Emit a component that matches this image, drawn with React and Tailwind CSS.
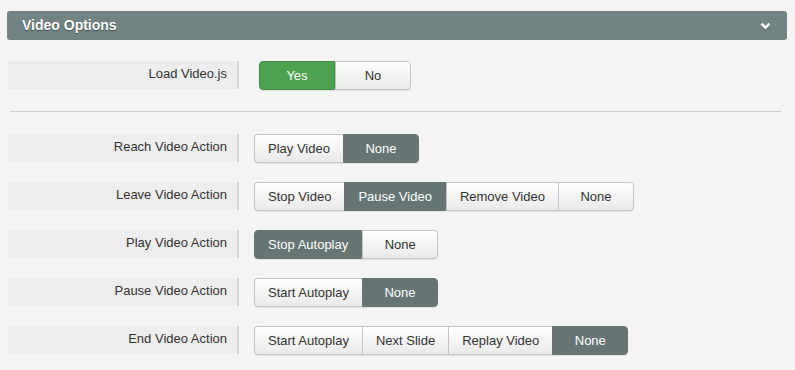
// Video options settings panel
import React from 'react';

const rows = [
  { label: 'Reach Video Action', options: ['Play Video', 'None'], active: 1 },
  { label: 'Leave Video Action', options: ['Stop Video', 'Pause Video', 'Remove Video', 'None'], active: 1 },
  { label: 'Play Video Action', options: ['Stop Autoplay', 'None'], active: 0 },
  { label: 'Pause Video Action', options: ['Start Autoplay', 'None'], active: 1 },
  { label: 'End Video Action', options: ['Start Autoplay', 'Next Slide', 'Replay Video', 'None'], active: 3 },
];

const Label = ({ children }) => (
  <div className="flex items-center w-[231px] h-[28px] bg-[#ededed] border-r-2 border-[#d4d4d4] justify-end pr-[10px] pb-[2px] text-[13px] text-[#333]">
    {children}
  </div>
);

const Segmented = ({ options, active, green }) => (
  <div className="flex h-[29px] rounded-[4px] shadow-[0_1px_1px_rgba(0,0,0,0.08)]">
    {options.map((o, i) => {
      const first = i === 0;
      const last = i === options.length - 1;
      const on = i === active;
      let cls = 'flex items-center justify-center min-w-[76px] px-[13px] text-[13px] ';
      if (first) cls += 'rounded-l-[4px] ';
      if (last) cls += 'rounded-r-[4px] ';
      if (on) {
        cls += green
          ? 'bg-[#4ea24f] text-white border border-[#3f8f40] '
          : 'bg-[#667474] text-white border border-[#667474] ';
      } else {
        cls += 'bg-gradient-to-b from-white to-[#e9e9e9] text-[#333] border-y border-[#c4c4c4] ';
        if (first) cls += 'border-l ';
        if (last) cls += 'border-r ';
        if (!first) cls += 'border-l ';
      }
      return (
        <div key={i} className={cls}>
          {o}
        </div>
      );
    })}
  </div>
);

export default function App() {
  return (
    <div className="w-[795px] h-[370px] bg-[#f4f4f4] pt-[11px] pl-[7px] font-['Liberation_Sans',Arial,sans-serif] overflow-hidden">
      <div className="w-[780px] h-[29px] bg-[#718383] rounded-[3px] flex items-center justify-between pl-[15px] pr-[16px]">
        <span className="text-white font-bold text-[14px] [text-shadow:0_1px_1px_rgba(0,0,0,0.45)]">Video Options</span>
        <svg width="11" height="8" viewBox="0 0 11 8" className="drop-shadow-[0_1px_0_rgba(0,0,0,0.3)]">
          <path d="M1.5 1.8 L5.5 5.6 L9.5 1.8" fill="none" stroke="white" strokeWidth="2.6" />
        </svg>
      </div>

      <div className="flex items-start mt-[21px] ml-[1px]">
        <Label>Load Video.js</Label>
        <div className="ml-[20px]">
          <Segmented options={['Yes', 'No']} active={0} green />
        </div>
      </div>

      <div className="mt-[21px] ml-[3px] w-[771px] h-[1px] bg-[#cfcfcf]" />

      <div className="flex flex-col gap-[19px] mt-[22px] ml-[1px]">
        {rows.map((r) => (
          <div key={r.label} className="flex items-start">
            <Label>{r.label}</Label>
            <div className="ml-[15px]">
              <Segmented options={r.options} active={r.active} />
            </div>
          </div>
        ))}
      </div>
    </div>
  );
}
